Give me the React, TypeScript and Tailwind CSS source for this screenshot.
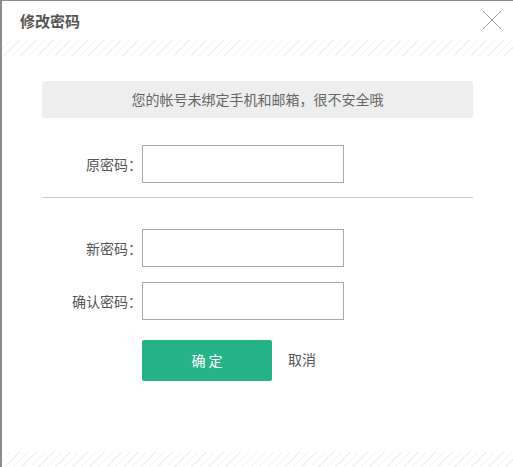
import { useState } from "react"

const stripes =
  "bg-[repeating-linear-gradient(135deg,#f1f1f1_0px,#f1f1f1_1px,transparent_1px,transparent_6px)]"

function Field({ label, value, onChange }: { label: string; value: string; onChange: (v: string) => void }) {
  return (
    <div className="flex items-center">
      <label className="w-[100px] text-right text-[14px] text-[#555]">{label}：</label>
      <input
        type="password"
        value={value}
        onChange={(e) => onChange(e.target.value)}
        className="w-[202px] h-[38px] border border-[#a9a9a9] bg-white px-2 text-[14px] outline-none"
      />
    </div>
  )
}

export default function App() {
  const [oldPwd, setOldPwd] = useState("")
  const [newPwd, setNewPwd] = useState("")
  const [confirmPwd, setConfirmPwd] = useState("")

  return (
    <div
      className="w-[513px] h-[467px] bg-white border-t border-l-2 border-[#8c8c8c] flex flex-col overflow-hidden"
      style={{ fontFamily: '"Noto Sans CJK SC", "Noto Sans", sans-serif' }}
    >
      {/* Header */}
      <div className="h-[39px] flex items-center justify-between pl-[18px] pr-[11px]">
        <h1 className="text-[15px] font-bold text-[#555] pt-[2px]">修改密码</h1>
        <button className="w-[20px] h-[20px] -mt-[1px]">
          <svg viewBox="0 0 20 20" className="w-[20px] h-[20px]" stroke="#9a9a9a" strokeWidth={1}>
            <path d="M1 1L19 19M19 1L1 19" />
          </svg>
        </button>
      </div>
      <div className={`h-[16px] ${stripes}`} />

      {/* Body */}
      <div className="flex-1 px-[40px] pt-[25px]">
        <div className="h-[37px] rounded-[3px] bg-[#eeeeee] flex items-center justify-center text-[14px] text-[#666]">
          您的帐号未绑定手机和邮箱，很不安全哦
        </div>

        <div className="mt-[27px]">
          <Field label="原密码" value={oldPwd} onChange={setOldPwd} />
        </div>

        <div className="mt-[14px] h-px bg-[#cccccc]" />

        <div className="mt-[31px] flex flex-col gap-[15px]">
          <Field label="新密码" value={newPwd} onChange={setNewPwd} />
          <Field label="确认密码" value={confirmPwd} onChange={setConfirmPwd} />
        </div>

        <div className="mt-[20px] flex items-center pl-[100px]">
          <button className="w-[130px] h-[41px] rounded-[2px] bg-[#27b38a] text-white text-[14px]">确 定</button>
          <button className="ml-[16px] text-[14px] text-[#555] -mt-[3px]">取消</button>
        </div>
      </div>

      <div className={`h-[15px] ${stripes}`} />
    </div>
  )
}
